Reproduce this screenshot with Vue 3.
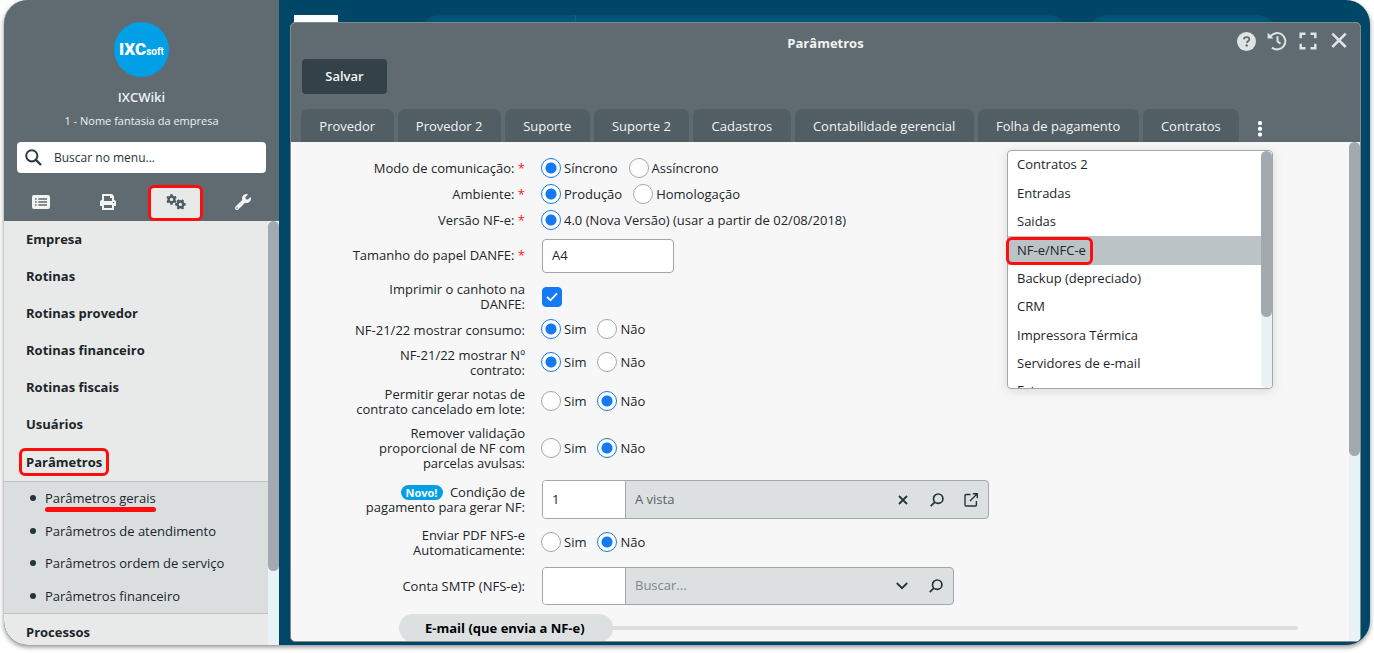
<script setup>
import { ref } from 'vue'

const search = ref('')

const menuTop = ['Empresa', 'Rotinas', 'Rotinas provedor', 'Rotinas financeiro', 'Rotinas fiscais', 'Usuários']
const submenu = ['Parâmetros gerais', 'Parâmetros de atendimento', 'Parâmetros ordem de serviço', 'Parâmetros financeiro']
const tabs = ['Provedor', 'Provedor 2', 'Suporte', 'Suporte 2', 'Cadastros', 'Contabilidade gerencial', 'Folha de pagamento', 'Contratos']
const moreTabs = ['Contratos 2', 'Entradas', 'Saidas', 'NF-e/NFC-e', 'Backup (depreciado)', 'CRM', 'Impressora Térmica', 'Servidores de e-mail', 'Estoque']
const activeTab = 'NF-e/NFC-e'

const topFields = ref([
  { id: 'modo', label: 'Modo de comunicação:', required: true, options: ['Síncrono', 'Assíncrono'], value: 'Síncrono' },
  { id: 'ambiente', label: 'Ambiente:', required: true, options: ['Produção', 'Homologação'], value: 'Produção' },
  { id: 'versao', label: 'Versão NF-e:', required: true, options: ['4.0 (Nova Versão) (usar a partir de 02/08/2018)'], value: '4.0 (Nova Versão) (usar a partir de 02/08/2018)' }
])
const yesNo = ['Sim', 'Não']
const midFields = ref([
  { id: 'consumo', label: 'NF-21/22 mostrar consumo:', options: yesNo, value: 'Sim' },
  { id: 'contrato', label: 'NF-21/22 mostrar Nº contrato:', options: yesNo, value: 'Sim' },
  { id: 'lote', label: 'Permitir gerar notas de contrato cancelado em lote:', options: yesNo, value: 'Não' },
  { id: 'validacao', label: 'Remover validação proporcional de NF com parcelas avulsas:', options: yesNo, value: 'Não' }
])
const enviarPdf = ref('Não')
const paper = ref('A4')
const stub = ref(true)
const paymentCode = ref('1')
const paymentName = ref('A vista')
const smtpCode = ref('')
const smtpName = ref('')

function gear(cx, cy, outer, inner, hole, teeth, turn) {
  const pts = []
  const step = (Math.PI * 2) / teeth
  for (let i = 0; i < teeth; i++) {
    const a = i * step + turn
    const corners = [[inner, -0.32], [outer, -0.2], [outer, 0.2], [inner, 0.32]]
    for (const [r, k] of corners) {
      pts.push(`${(cx + r * Math.cos(a + k * step)).toFixed(2)} ${(cy + r * Math.sin(a + k * step)).toFixed(2)}`)
    }
  }
  return `M${pts.join('L')}ZM${cx - hole} ${cy}a${hole} ${hole} 0 1 0 ${hole * 2} 0a${hole} ${hole} 0 1 0 ${-hole * 2} 0Z`
}
const gears = gear(5.5, 5.5, 5.4, 4.1, 1.7, 6, 0.52) + gear(14.4, 10.4, 5.4, 4.1, 1.7, 6, 0)
</script>

<template>
  <div class="shell">
    <aside class="sidebar">
      <header class="profile">
        <div class="logo"><b>IXC</b><span>soft</span></div>
        <strong class="user">IXCWiki</strong>
        <span class="company">1 - Nome fantasia da empresa</span>
        <label class="search">
          <svg width="17" height="17" viewBox="0 0 17 17" fill="none" stroke="#2b3b42" stroke-width="2"><circle cx="6.8" cy="6.8" r="5.6" /><path d="M11 11l5 5" stroke-width="2.4" /></svg>
          <input v-model="search" type="search" placeholder="Buscar no menu..." aria-label="Buscar no menu" />
        </label>
        <nav class="modes" aria-label="Seções">
          <button type="button" aria-label="Lista">
            <svg width="18" height="14" viewBox="0 0 18 14"><rect width="18" height="14" rx="2" fill="#f2f4f4" /><path d="M3 4h1.6M3 7h1.6M3 10h1.6M6.4 4H15M6.4 7H15M6.4 10H15" stroke="#5f6b71" stroke-width="1.3" /></svg>
          </button>
          <button type="button" aria-label="Imprimir">
            <svg width="16" height="16" viewBox="0 0 512 512" fill="#f2f4f4"><path d="M448 192V77.25c0-8.49-3.37-16.62-9.37-22.63L393.37 9.37c-6-6-14.14-9.37-22.63-9.37H96C78.33 0 64 14.33 64 32v160c-35.35 0-64 28.65-64 64v112c0 8.84 7.16 16 16 16h48v96c0 17.67 14.33 32 32 32h320c17.67 0 32-14.33 32-32v-96h48c8.84 0 16-7.16 16-16V256c0-35.35-28.65-64-64-64zm-64 256H128v-96h256v96zm0-224H128V64h192v48c0 8.84 7.16 16 16 16h48v96zm48 72c-13.25 0-24-10.75-24-24 0-13.26 10.75-24 24-24s24 10.74 24 24c0 13.25-10.75 24-24 24z" /></svg>
          </button>
          <button type="button" class="current" aria-label="Configurações">
            <svg width="20" height="16" viewBox="0 0 20 16" fill="#4d5b61" fill-rule="evenodd"><path :d="gears" /></svg>
          </button>
          <button type="button" aria-label="Ferramentas">
            <svg width="16" height="16" viewBox="0 0 512 512" fill="#f2f4f4"><path d="M507.73 109.1c-2.24-9.03-13.54-12.09-20.12-5.51l-74.36 74.36-67.88-11.31-11.31-67.88 74.36-74.36c6.62-6.62 3.43-17.9-5.66-20.16-47.38-11.74-99.55.91-136.58 37.93-39.64 39.64-50.55 97.1-34.05 147.2L18.74 402.76c-24.99 24.99-24.99 65.51 0 90.5 24.99 24.99 65.51 24.99 90.5 0l213.21-213.21c50.12 16.71 107.47 5.68 147.37-34.22 37.07-37.07 49.7-89.32 37.91-136.73zM64 472c-13.25 0-24-10.75-24-24 0-13.26 10.75-24 24-24s24 10.74 24 24c0 13.25-10.75 24-24 24z" /></svg>
          </button>
        </nav>
      </header>
      <div class="scroll-area">
        <ul class="menu">
          <li v-for="item in menuTop" :key="item"><a href="#">{{ item }}</a></li>
          <li>
            <a href="#" class="open"><span class="marked">Parâmetros</span></a>
            <ul class="submenu">
              <li v-for="(item, i) in submenu" :key="item"><a href="#" :class="{ underlined: i === 0 }">{{ item }}</a></li>
            </ul>
          </li>
          <li><a href="#">Processos</a></li>
        </ul>
        <div class="track"><div class="thumb side-thumb"></div></div>
      </div>
    </aside>

    <main class="workspace">
      <div class="backdrop" aria-hidden="true">
        <span class="back-logo"></span>
        <span class="back-pill wide"><i></i></span>
        <span class="back-pill"></span>
      </div>

      <section class="window" aria-labelledby="window-title">
        <header class="window-head">
          <div class="title-bar">
            <h1 id="window-title">Parâmetros</h1>
            <div class="window-actions">
              <button type="button" aria-label="Ajuda">
                <svg width="19" height="19" viewBox="0 0 19 19"><circle cx="9.5" cy="9.5" r="9.5" fill="#dfe3e3" /><path d="M6.9 7.4C7 5.9 8 5.1 9.6 5.1c1.6 0 2.7.8 2.7 2.2 0 1.9-2.5 1.9-2.5 3.6" fill="none" stroke="#5f6b71" stroke-width="1.8" /><circle cx="9.7" cy="13.4" r="1.2" fill="#5f6b71" /></svg>
              </button>
              <button type="button" aria-label="Histórico">
                <svg width="20" height="20" viewBox="0 0 20 20" fill="none" stroke="#dfe3e3" stroke-width="2"><path d="M3.3 5.7A8.2 8.2 0 1 1 5 16.6" /><path d="M10.5 5.2v5l3 2.6" /><path d="M.6 1.6v5.8h5.9z" fill="#dfe3e3" stroke="none" /></svg>
              </button>
              <button type="button" aria-label="Tela cheia">
                <svg width="18" height="18" viewBox="0 0 18 18" fill="none" stroke="#dfe3e3" stroke-width="2.4"><path d="M1.7 6.2V1.7h4.8M11.5 1.7h4.8v4.5M16.3 11.8v4.5h-4.8M6.5 16.3H1.7v-4.5" /></svg>
              </button>
              <button type="button" aria-label="Fechar">
                <svg width="18" height="18" viewBox="0 0 18 18" fill="none" stroke="#dfe3e3" stroke-width="2.6"><path d="M2.3 1.6l13.4 13.4M15.7 1.6L2.3 15" /></svg>
              </button>
            </div>
          </div>
          <button type="button" class="save">Salvar</button>
          <nav class="tabs" aria-label="Abas">
            <button v-for="tab in tabs" :key="tab" type="button" class="tab">{{ tab }}</button>
            <button type="button" class="more" aria-label="Mais abas"><svg width="4" height="16" viewBox="0 0 4 16" fill="#fff"><rect y="0" width="4" height="4" rx="1.5" /><rect y="5.7" width="4" height="4" rx="1.5" /><rect y="11.4" width="4" height="4" rx="1.5" /></svg></button>
          </nav>
        </header>

        <div class="window-body">
          <form class="form" @submit.prevent>
            <div v-for="f in topFields" :key="f.id" class="row">
              <span :id="f.id" class="label">{{ f.label }} <em>*</em></span>
              <div class="choices" role="radiogroup" :aria-labelledby="f.id">
                <label v-for="o in f.options" :key="o"><input v-model="f.value" type="radio" :name="f.id" :value="o" />{{ o }}</label>
              </div>
            </div>
            <div class="row">
              <label class="label" for="paper">Tamanho do papel DANFE: <em>*</em></label>
              <input id="paper" v-model="paper" class="box" type="text" />
            </div>
            <div class="row">
              <label class="label" for="stub">Imprimir o canhoto na DANFE:</label>
              <span class="tick">
                <input id="stub" v-model="stub" type="checkbox" />
                <svg v-if="stub" width="12" height="10" viewBox="0 0 12 10" fill="none" stroke="#fff" stroke-width="1.8"><path d="M1 4.8l3.5 3.5L11 1.4" /></svg>
              </span>
            </div>
            <div v-for="f in midFields" :key="f.id" class="row">
              <span :id="f.id" class="label">{{ f.label }}</span>
              <div class="choices yes-no" role="radiogroup" :aria-labelledby="f.id">
                <label v-for="o in f.options" :key="o"><input v-model="f.value" type="radio" :name="f.id" :value="o" />{{ o }}</label>
              </div>
            </div>
            <div class="row">
              <label class="label" for="payment"><span class="badge">Novo!</span> Condição de pagamento para gerar NF:</label>
              <div class="lookup long">
                <input id="payment" v-model="paymentCode" class="code" type="text" />
                <input v-model="paymentName" class="name" type="text" aria-label="Nome da condição de pagamento" />
                <button type="button" aria-label="Limpar"><svg width="10" height="10" viewBox="0 0 10 10" fill="none" stroke="#25343a" stroke-width="1.8"><path d="M1 1l8 8M9 1L1 9" /></svg></button>
                <button type="button" aria-label="Pesquisar"><svg width="14" height="14" viewBox="0 0 14 14" fill="none" stroke="#25343a" stroke-width="1.7"><circle cx="8.2" cy="5.7" r="4.7" /><path d="M4.8 9.1L.7 13.2" /></svg></button>
                <button type="button" aria-label="Abrir cadastro"><svg width="14" height="14" viewBox="0 0 14 14" fill="none" stroke="#25343a" stroke-width="1.4"><path d="M6.5 1.5H2.2a1.2 1.2 0 0 0-1.2 1.2v9.1a1.2 1.2 0 0 0 1.2 1.2h9a1.2 1.2 0 0 0 1.2-1.2V8M8.8.8h4.5v4.5M13 1L6 8" /></svg></button>
              </div>
            </div>
            <div class="row">
              <span id="enviar" class="label">Enviar PDF NFS-e Automaticamente:</span>
              <div class="choices yes-no" role="radiogroup" aria-labelledby="enviar">
                <label v-for="o in yesNo" :key="o"><input v-model="enviarPdf" type="radio" name="enviar" :value="o" />{{ o }}</label>
              </div>
            </div>
            <div class="row">
              <label class="label" for="smtp">Conta SMTP (NFS-e):</label>
              <div class="lookup">
                <input id="smtp" v-model="smtpCode" class="code" type="text" />
                <input v-model="smtpName" class="name" type="text" placeholder="Buscar..." aria-label="Nome da conta SMTP" />
                <button type="button" aria-label="Expandir"><svg width="12" height="8" viewBox="0 0 12 8" fill="none" stroke="#25343a" stroke-width="1.8"><path d="M.8 1l5.2 5.2L11.2 1" /></svg></button>
                <button type="button" aria-label="Pesquisar"><svg width="14" height="14" viewBox="0 0 14 14" fill="none" stroke="#25343a" stroke-width="1.7"><circle cx="8.2" cy="5.7" r="4.7" /><path d="M4.8 9.1L.7 13.2" /></svg></button>
              </div>
            </div>
            <h2 class="group"><span>E-mail (que envia a NF-e)</span></h2>
          </form>
          <div class="track"><div class="thumb body-thumb"></div></div>

          <div class="dropdown">
            <ul>
              <li v-for="item in moreTabs" :key="item">
                <button type="button" :class="{ active: item === activeTab }"><span>{{ item }}</span></button>
              </li>
            </ul>
            <div class="track"><div class="thumb drop-thumb"></div></div>
          </div>
        </div>
      </section>
    </main>
  </div>
</template>

<style>
html,
body {
  margin: 0;
  background: #fff;
}
</style>

<style scoped>
* {
  box-sizing: border-box;
}
.shell {
  display: flex;
  height: calc(100vh - 8px);
  margin: 0 4px 8px;
  overflow: hidden;
  border-radius: 24px;
  background: #004666;
  box-shadow: 0 2px 5px rgba(0, 0, 0, 0.45);
  font-family: "Open Sans", "Noto Sans", sans-serif;
  font-size: 13px;
  color: #1b262b;
}
button,
input {
  margin: 0;
  padding: 0;
  border: 0;
  background: none;
  font: inherit;
  color: inherit;
}
button {
  display: flex;
  align-items: center;
  justify-content: center;
}
input {
  min-width: 0;
}
a {
  color: inherit;
  text-decoration: none;
}
ul {
  margin: 0;
  padding: 0;
  list-style: none;
}
.track {
  width: 11px;
  flex: none;
  background: #e9f2f5;
}
.thumb {
  border-radius: 6px;
  background: #a2aab0;
}

/* sidebar */
.sidebar {
  display: flex;
  flex-direction: column;
  flex: none;
  width: 275px;
  background: #e7eae9;
}
.profile {
  display: flex;
  flex-direction: column;
  align-items: center;
  flex: none;
  padding-top: 22px;
  background: #5f6b71;
  color: #eef0f0;
}
.logo {
  display: flex;
  align-items: baseline;
  justify-content: center;
  width: 55px;
  height: 55px;
  border-radius: 50%;
  background: #009fe6;
  color: #fff;
  font-family: Roboto, sans-serif;
  font-size: 10px;
  font-weight: 700;
  line-height: 55px;
}
.logo b {
  font-size: 17px;
  font-weight: 900;
}
.user {
  margin-top: 11px;
  line-height: 18px;
  font-weight: 600;
}
.company {
  margin-top: 7px;
  font-size: 11px;
  line-height: 16px;
}
.search {
  display: flex;
  align-items: center;
  gap: 12px;
  align-self: stretch;
  height: 31px;
  margin: 13px 13px 0;
  padding: 0 8px;
  border-radius: 4px;
  background: #fff;
}
.search input {
  flex: 1;
  outline: 0;
  font-size: 12px;
  color: #25343a;
}
.search input::placeholder {
  color: #25343a;
}
.modes {
  display: flex;
  align-self: stretch;
  margin-top: 12px;
  padding: 0 3px;
}
.modes button {
  flex: 1;
  height: 36px;
  padding-bottom: 2px;
}
.modes .current {
  flex: none;
  width: 55px;
  margin: 0 6px 0 7px;
  border: 3px solid #fd0d0d;
  border-radius: 6px;
  background: #e7eae9;
}
.scroll-area {
  display: flex;
  flex: 1;
  min-height: 0;
  overflow: hidden;
}
.menu {
  flex: 1;
}
.menu > li > a {
  display: flex;
  align-items: center;
  height: 37px;
  padding: 0 0 2px 22px;
  font-weight: 700;
}
.menu > li > .open {
  padding-bottom: 0;
}
.marked {
  margin-left: -7px;
  padding: 2px 4px;
  border: 3px solid #fd0d0d;
  border-radius: 6px;
}
.submenu {
  display: grid;
  grid-template-rows: repeat(4, 1fr);
  height: 133px;
  margin-top: 1px;
  border-top: 1px solid #bac2c4;
  border-bottom: 1px solid #bac2c4;
  background: #dadedf;
}
.submenu li {
  display: flex;
  align-items: center;
  gap: 9px;
  padding: 0 0 1px 26px;
}
.submenu li::before {
  content: "";
  width: 6px;
  height: 6px;
  border-radius: 50%;
  background: #25343a;
}
.submenu .underlined {
  position: relative;
}
.underlined::after {
  content: "";
  position: absolute;
  left: 0;
  right: 0;
  bottom: -5px;
  height: 5px;
  border-radius: 3px;
  background: #fd0d0d;
}
.side-thumb {
  height: 350px;
}

/* workspace */
.workspace {
  display: grid;
  grid-template: minmax(0, 1fr) / minmax(0, 1fr);
  flex: 1;
  min-width: 0;
}
.backdrop,
.window {
  grid-area: 1 / 1;
}
.backdrop {
  display: flex;
  height: 65px;
  padding: 15px 89px 0 15px;
}
.back-logo {
  width: 44px;
  margin-right: 78px;
  background: #fff;
}
.back-pill {
  flex: 197;
  border-radius: 25px;
  background: #00547a;
}
.back-pill.wide {
  flex: 656;
  margin-right: 12px;
}
.back-pill i {
  display: block;
  height: 50px;
  margin-left: 159px;
  border-left: 1px solid #00668c;
}
.window {
  display: flex;
  flex-direction: column;
  margin: 22px 9px 3px 11px;
  overflow: hidden;
  border: 1px solid #7f8a8f;
  border-radius: 5px;
  background: #f7f7f7;
}
.window-head {
  flex: none;
  background: #5f6b71;
  color: #f2f4f4;
}
.title-bar {
  display: grid;
  grid-template-columns: 1fr auto 1fr;
  align-items: center;
  height: 36px;
}
.title-bar h1 {
  grid-column: 2;
  margin: 0;
  padding-top: 4px;
  font-size: 13px;
  font-weight: 700;
}
.window-actions {
  display: flex;
  justify-content: flex-end;
  gap: 11px;
  padding-right: 11px;
}
.window-actions button {
  width: 20px;
  height: 20px;
}
.save {
  width: 85px;
  height: 35px;
  margin-left: 11px;
  padding-bottom: 2px;
  border-radius: 4px;
  background: #334249;
  font-weight: 600;
}
.tabs {
  display: flex;
  gap: 4px;
  margin-top: 15px;
  padding: 0 83px 0 10px;
}
.tab {
  flex: 1 1 auto;
  height: 33px;
  padding: 0 17px;
  border-radius: 7px 7px 0 0;
  background: #515e63;
  white-space: nowrap;
}
.more {
  flex: none;
  width: 34px;
  height: 33px;
  padding-top: 6px;
}
.window-body {
  position: relative;
  display: flex;
  flex: 1;
  min-height: 0;
}
.body-thumb {
  height: 314px;
}

/* form */
.form {
  display: flex;
  flex-direction: column;
  gap: 9px;
  flex: 1;
  min-width: 0;
  padding: 18px 51px 0 54px;
  overflow: hidden;
}
.row {
  display: grid;
  grid-template-columns: 180px 1fr;
  column-gap: 17px;
  align-items: center;
  flex: none;
}
.label {
  line-height: 15px;
  text-align: right;
}
.label em {
  color: #fd2020;
  font-style: normal;
}
.choices {
  display: flex;
  gap: 11px;
  height: 17px;
  margin-left: -1px;
  padding-bottom: 1px;
}
.choices.yes-no {
  height: 18px;
  padding-bottom: 2px;
}
.choices label {
  display: flex;
  align-items: center;
  gap: 3px;
}
.choices input {
  appearance: none;
  width: 20px;
  height: 20px;
  border: 1px solid #a0a8ac;
  border-radius: 50%;
  background: #fff;
}
.choices input:checked {
  border-color: #147af3;
  background: radial-gradient(circle, #147af3 5px, #fff 6px);
}
.box {
  width: 132px;
  height: 34px;
  margin-top: 1px;
  padding: 0 9px 2px;
  border: 1px solid #a0a8ac;
  border-radius: 4px;
  background: #fff;
}
.tick {
  display: grid;
  place-items: center;
  width: 20px;
  height: 20px;
}
.tick input,
.tick svg {
  grid-area: 1 / 1;
}
.tick input {
  appearance: none;
  width: 20px;
  height: 20px;
  border: 1px solid #a0a8ac;
  border-radius: 4px;
  background: #fff;
}
.tick input:checked {
  border-color: #147af3;
  background: #147af3;
}
.tick svg {
  pointer-events: none;
}
.badge {
  display: inline-block;
  margin-right: 4px;
  padding: 0 5px;
  border-radius: 8px;
  background: #009fe6;
  color: #fff;
  font-size: 11px;
  font-weight: 700;
  line-height: 15px;
  vertical-align: top;
}
.lookup {
  display: flex;
  width: 412px;
  height: 38px;
  overflow: hidden;
  border: 1px solid #a0a8ac;
  border-radius: 4px;
  background: #dce0e0;
}
.lookup.long {
  width: 447px;
  height: 39px;
}
.lookup .code {
  width: 83px;
  padding: 0 9px 2px;
  border-right: 1px solid #a0a8ac;
  background: #fff;
}
.lookup .name {
  flex: 1;
  padding: 0 9px 2px;
  color: #57646a;
}
.lookup .name::placeholder {
  color: #7d878b;
}
.lookup button {
  width: 34px;
}
.group {
  display: flex;
  align-items: center;
  flex: none;
  margin: 0 0 0 54px;
  font-size: 13px;
  font-weight: 700;
  color: #000;
}
.group span {
  padding: 0 28px 0 26px;
  border-radius: 14px;
  background: #dce0e0;
  line-height: 28px;
}
.group::after {
  content: "";
  flex: 1;
  height: 4px;
  border-radius: 0 2px 2px 0;
  background: #dce0e0;
}

/* overflow tabs menu */
.dropdown {
  position: absolute;
  top: 8px;
  right: 87px;
  display: flex;
  width: 266px;
  height: 239px;
  border: 1px solid #a0a8ac;
  border-radius: 4px;
  background: #fff;
  box-shadow: 0 2px 12px rgba(0, 0, 0, 0.12);
}
.dropdown ul {
  display: grid;
  grid-template-rows: repeat(9, minmax(0, 1fr));
  flex: 1;
  height: 256px;
  clip-path: inset(0 0 19px -4px);
}
.dropdown li {
  display: grid;
  grid-template-rows: minmax(0, 1fr);
}
.dropdown button {
  justify-content: flex-start;
  padding: 0 0 2px 9px;
}
.dropdown li:last-child button {
  padding-bottom: 5px;
}
.dropdown .active {
  padding: 0;
  background: #bcc3c6;
}
.active span {
  margin: 0 0 0 -2px;
  padding: 1px 4px 3px 8px;
  border: 3px solid #fd0d0d;
  border-radius: 6px;
  line-height: 18px;
}
.dropdown .track {
  border-radius: 6px;
}
.drop-thumb {
  height: 166px;
}
</style>
